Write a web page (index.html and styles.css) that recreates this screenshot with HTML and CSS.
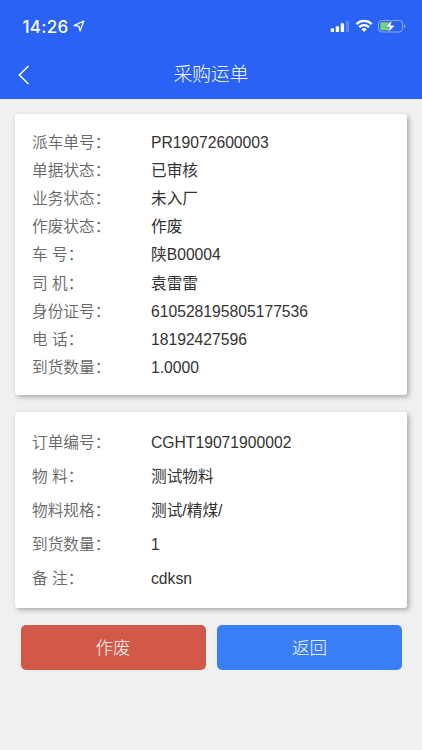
FILE: index.html
```html
<!DOCTYPE html>
<html lang="zh-CN">
<head>
<meta charset="utf-8">
<meta name="viewport" content="width=device-width, initial-scale=1">
<title>采购运单</title>
<link rel="stylesheet" href="styles.css">
</head>
<body>
<header class="header">
  <div class="status">
    <span class="time">14:26</span>
    <svg class="location" width="12" height="12" viewBox="0 0 12 12"><path d="M.9 5.6 10.8 1 7 10.9 5.9 6.1Z"/></svg>
    <svg class="indicators" width="78" height="16" viewBox="0 0 78 16">
      <g fill="#fff"><rect x="2.7" y="9.2" width="3.4" height="3.8" rx=".8"/><rect x="7.7" y="7.2" width="3.4" height="5.8" rx=".8"/><rect x="12.7" y="4.2" width="3.4" height="8.8" rx=".8"/><rect x="17.9" y="1.5" width="3.3" height="11.5" rx=".8" opacity=".22"/></g>
      <g fill="none" stroke="#fff" stroke-width="2.3"><path d="M28.5 5.1a10.8 10.8 0 0 1 15.2 0"/><path d="M31.3 8.1a6.7 6.7 0 0 1 9.6 0"/></g>
      <path fill="#fff" d="M33.5 10.2a3.8 3.8 0 0 1 5.2 0L36.1 13Z"/>
      <rect x="50.5" y="1.5" width="24" height="11.5" rx="3.2" fill="none" stroke="#fff" opacity=".45"/>
      <rect x="52.4" y="3.3" width="9.5" height="8" rx="1.2" fill="#76d779"/>
      <path d="M76 5.3c1.8.6 1.8 3.3 0 3.9Z" fill="#fff" opacity=".5"/>
      <path d="M64.2 1 57.2 8h4.2l-1.5 5.7L67.2 6.3h-4.4Z" fill="#fff" stroke="#2962f4" stroke-width=".6"/>
    </svg>
  </div>
  <nav class="nav">
    <svg class="back" width="12" height="20" viewBox="0 0 12 20"><path d="M10.5 1 1.3 10 10.5 19"/></svg>
    <h1>采购运单</h1>
  </nav>
</header>
<main>
  <dl class="card">
    <div><dt>派车单号：</dt><dd>PR19072600003</dd></div>
    <div><dt>单据状态：</dt><dd>已审核</dd></div>
    <div><dt>业务状态：</dt><dd>未入厂</dd></div>
    <div><dt>作废状态：</dt><dd>作废</dd></div>
    <div><dt>车 号：</dt><dd>陕B00004</dd></div>
    <div><dt>司 机：</dt><dd>袁雷雷</dd></div>
    <div><dt>身份证号：</dt><dd>610528195805177536</dd></div>
    <div><dt>电 话：</dt><dd>18192427596</dd></div>
    <div><dt>到货数量：</dt><dd>1.0000</dd></div>
  </dl>
  <dl class="card order">
    <div><dt>订单编号：</dt><dd>CGHT19071900002</dd></div>
    <div><dt>物 料：</dt><dd>测试物料</dd></div>
    <div><dt>物料规格：</dt><dd>测试/精煤/</dd></div>
    <div><dt>到货数量：</dt><dd>1</dd></div>
    <div><dt>备 注：</dt><dd>cdksn</dd></div>
  </dl>
  <div class="actions">
    <button class="void">作废</button>
    <button class="return">返回</button>
  </div>
</main>
</body>
</html>
```
FILE: styles.css
```css
* { box-sizing: border-box; }
body {
  margin: 0;
  min-height: 750px;
  background: #f0f0f0;
  font-family: "Liberation Sans", "Noto Sans CJK SC", sans-serif;
  font-weight: 300;
}
.header { height: 99px; background: #2962f4; color: #fff; }
.status {
  height: 50px;
  padding: 3px 16px 0 22.5px;
  display: flex;
  align-items: center;
}
.time { font: 500 17px/20px Inter, sans-serif; letter-spacing: .3px; }
.location { margin-left: 4px; margin-top: -2px; fill: none; stroke: #fff; stroke-width: 1.3; stroke-linejoin: round; }
.indicators { margin-left: auto; }
.nav { position: relative; height: 49px; display: flex; align-items: center; justify-content: center; }
.nav h1 { margin: 0; font-size: 18.8px; line-height: 28px; font-weight: 300; }
.back { position: absolute; left: 18px; top: 15px; fill: none; stroke: #fff; stroke-width: 1.5; }
main { padding: 15px 15px 0; }
.card {
  margin: 0 0 17px;
  height: 281px;
  padding: 15px 17px 0;
  background: #fff;
  border-radius: 3px;
  box-shadow: 2px 2px 5px rgba(0, 0, 0, .3);
  font-size: 15.7px;
}
.card div { display: flex; height: 28.1px; align-items: center; line-height: 24px; }
.card dt { width: 119px; color: #666; white-space: nowrap; font-weight: 350; }
.card dd { margin: 0; color: #333; white-space: nowrap; font-weight: 400; }
.card.order { height: 196px; padding-top: 14.5px; }
.order div { height: 33.8px; }
.actions { display: grid; grid-template-columns: 1fr 1fr; gap: 11.5px; padding: 0 5px 0 5.5px; }
.actions button {
  height: 45px;
  border: 0;
  border-radius: 5px;
  padding: 0;
  color: #fff;
  font: 300 17.6px/26px "Liberation Sans", "Noto Sans CJK SC", sans-serif;
}
.void { background: #d25848; }
.return { background: #387ef5; }
```
